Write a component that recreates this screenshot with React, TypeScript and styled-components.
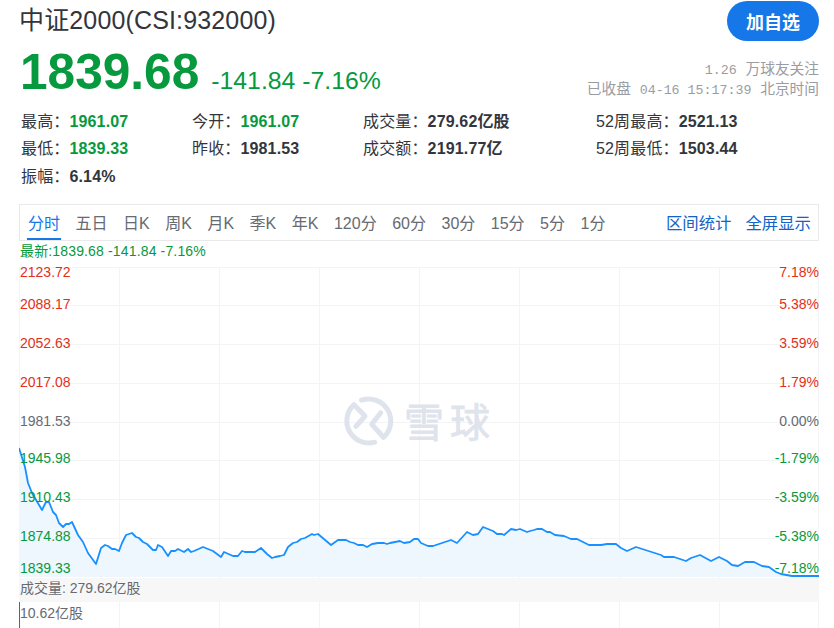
import React from 'react';
import styled, { createGlobalStyle } from 'styled-components';

const SANS = '"Liberation Sans", "Noto Sans CJK SC", sans-serif';
const GREEN = '#06993d';
const RED = '#e1301a';
const BLUE = '#1677e8';

const GlobalStyle = createGlobalStyle`
  html, body {
    margin: 0;
    padding: 0;
    background: #fff;
    overflow: hidden;
  }
  body {
    font-family: ${SANS};
    color: #33353c;
  }
`;

const Page = styled.div`
  width: 834px;
  height: 628px;
  padding: 0 15px 0 19px;
  box-sizing: border-box;
  overflow: hidden;
`;

const Header = styled.div`
  display: flex;
  justify-content: space-between;
  height: 43px;
`;

const Title = styled.h1`
  margin: 0;
  padding: 5px 0 0;
  font-size: 25px;
  line-height: 30px;
  font-weight: 400;
  letter-spacing: 0.15px;
  color: #33353c;
`;

const FollowButton = styled.button`
  width: 92px;
  height: 40px;
  margin: 1px 0 0;
  padding: 0;
  border: 0;
  border-radius: 20px;
  background: ${BLUE};
  color: #fff;
  font-family: ${SANS};
  font-size: 18px;
  font-weight: 700;
`;

const QuoteRow = styled.div`
  display: flex;
  justify-content: space-between;
  height: 59px;
`;

const QuoteMain = styled.div`
  display: flex;
  align-items: baseline;
  gap: 12px;
  padding-left: 1px;
  color: ${GREEN};
`;

const Price = styled.strong`
  font-size: 49.6px;
  line-height: 58px;
  font-weight: 700;
`;

const Change = styled.span`
  font-size: 24.8px;
`;

const Meta = styled.div`
  padding-top: 18px;
  text-align: right;
  color: #9a9ca3;
  font-family: "Liberation Mono", "Noto Sans CJK SC", monospace;
  font-size: 14.7px;
  line-height: 19.5px;
`;

const MetaNum = styled.span`
  font-size: 13.3px;
`;

const Stats = styled.div`
  display: grid;
  grid-template-columns: 171px 171px 233px 1fr;
  grid-auto-rows: 27.5px;
  height: 102px;
  padding: 4px 0 0 2px;
  box-sizing: border-box;
  align-items: center;
`;

const Stat = styled.div`
  font-size: 16px;
  letter-spacing: 0.15px;
  white-space: nowrap;
`;

const StatValue = styled.b<{ $green?: boolean }>`
  font-size: 16px;
  color: ${(p) => (p.$green ? GREEN : '#33353c')};
`;

const TabBar = styled.div`
  display: flex;
  align-items: stretch;
  justify-content: space-between;
  height: 37px;
  padding: 0 7px 0 7px;
  box-sizing: border-box;
  border: 1px solid #e9e9ec;
`;

const Tabs = styled.div`
  display: flex;
  gap: 13.5px;
`;

const Tab = styled.div<{ $active?: boolean }>`
  padding: 0 1px;
  font-size: 16px;
  line-height: 37px;
  height: 35px;
  box-sizing: border-box;
  color: ${(p) => (p.$active ? BLUE : '#666a72')};
  border-bottom: 2px solid ${(p) => (p.$active ? BLUE : 'transparent')};
`;

const TabLinks = styled.div`
  display: flex;
  gap: 14px;
`;

const TabLink = styled.div`
  font-size: 16.4px;
  line-height: 37px;
  color: #1263c7;
`;

const LatestLine = styled.div`
  padding-left: 1px;
  height: 21px;
  font-size: 14px;
  letter-spacing: 0.15px;
  line-height: 21px;
  color: ${GREEN};
`;

const Chart = styled.svg`
  display: block;
  width: 800px;
  height: 366px;
  overflow: hidden;
  font-family: ${SANS};
  font-size: 14px;
`;

// coordinates are page pixels, y=0 in the viewBox is the chart's top grid line
const CHART_X = 19;
const CHART_Y = 267;

const raw = `19,448 25,467 28,483 32,493 42,510 46,502 49,502 53,512 56,515 59,523 63,527 66,524 69,524 72,522 78,535
83,542 88,553 96,564 101,548 105,545 108,546 112,549 115,549 119,551 122,543 126,535 132,533 136,537 139,538 143,542
147,544 153,550 156,550 158,545 162,547 166,553 168,556 171,551 175,551 178,549 184,552 188,549 191,552 194,551 203,547
213,551 221,557 224,552 233,556 238,556 242,551 245,552 255,552 261,548 267,554 272,558 275,557 280,556 284,555 288,547
293,543 297,542 301,539 305,538 312,534 314,535 318,534 331,545 338,540 346,540 350,542 354,543 358,545 363,545 367,547
372,544 378,543 384,543 387,544 390,543 400,541 404,543 410,542 414,539 418,539 421,543 428,546 433,546 442,543 451,540
457,543 467,532 473,535 478,534 483,527 493,531 497,534 502,534 504,535 511,529 516,530 520,529 527,532 530,531 534,530
537,529 542,529 547,532 550,532 555,535 564,536 571,539 577,539 589,545 601,545 607,544 616,544 621,548 627,551 636,547
661,555 664,557 674,557 686,561 691,558 700,555 711,561 719,557 727,561 732,565 738,566 745,562 754,562 762,566 769,567
776,572 781,574 792,576 819,576`;

const points = raw
  .trim()
  .split(/\s+/)
  .map((p) => p.split(',').map(Number))
  .map(([x, y]) => `${x - CHART_X},${y - CHART_Y}`);

const linePath = points.join(' ');
const areaPath = `${linePath} 800,310 0,310`;

const gridY = [0, 38, 77, 116, 155, 193, 232, 271];
const gridX = [0, 100, 200, 300, 400, 500, 600, 700, 800];

const axis = [
  { left: '2123.72', right: '7.18%', y: 10, color: RED },
  { left: '2088.17', right: '5.38%', y: 42, color: RED },
  { left: '2052.63', right: '3.59%', y: 81, color: RED },
  { left: '2017.08', right: '1.79%', y: 120, color: RED },
  { left: '1981.53', right: '0.00%', y: 159, color: '#666a72' },
  { left: '1945.98', right: '-1.79%', y: 196, color: GREEN },
  { left: '1910.43', right: '-3.59%', y: 235, color: GREEN },
  { left: '1874.88', right: '-5.38%', y: 274, color: GREEN },
  { left: '1839.33', right: '-7.18%', y: 306, color: GREEN },
];

const tabs = ['分时', '五日', '日K', '周K', '月K', '季K', '年K', '120分', '60分', '30分', '15分', '5分', '1分'];

const App = () => {
  return (
    <Page>
      <GlobalStyle />
      <Header>
        <Title>中证2000(CSI:932000)</Title>
        <FollowButton>加自选</FollowButton>
      </Header>
      <QuoteRow>
        <QuoteMain>
          <Price>1839.68</Price>
          <Change>-141.84 -7.16%</Change>
        </QuoteMain>
        <Meta>
          <div><MetaNum>1.26</MetaNum> 万球友关注</div>
          <div>已收盘 <MetaNum>04-16 15:17:39</MetaNum> 北京时间</div>
        </Meta>
      </QuoteRow>
      <Stats>
        <Stat>最高：<StatValue $green>1961.07</StatValue></Stat>
        <Stat>今开：<StatValue $green>1961.07</StatValue></Stat>
        <Stat>成交量：<StatValue>279.62亿股</StatValue></Stat>
        <Stat>52周最高：<StatValue>2521.13</StatValue></Stat>
        <Stat>最低：<StatValue $green>1839.33</StatValue></Stat>
        <Stat>昨收：<StatValue>1981.53</StatValue></Stat>
        <Stat>成交额：<StatValue>2191.77亿</StatValue></Stat>
        <Stat>52周最低：<StatValue>1503.44</StatValue></Stat>
        <Stat>振幅：<StatValue>6.14%</StatValue></Stat>
      </Stats>
      <TabBar>
        <Tabs>
          {tabs.map((t, i) => (
            <Tab key={t} $active={i === 0}>{t}</Tab>
          ))}
        </Tabs>
        <TabLinks>
          <TabLink>区间统计</TabLink>
          <TabLink>全屏显示</TabLink>
        </TabLinks>
      </TabBar>
      <LatestLine>最新:1839.68 -141.84 -7.16%</LatestLine>
      <Chart viewBox="0 -5 800 366">
        {gridY.map((y) => (
          <line key={y} x1={0} x2={800} y1={y + 0.5} y2={y + 0.5} stroke="#f3f4f6" />
        ))}
        {gridX.map((x) => (
          <line key={x} x1={x === 800 ? 799.5 : x + 0.5} x2={x === 800 ? 799.5 : x + 0.5} y1={0} y2={361} stroke="#f3f4f6" />
        ))}
        {/* 雪球 watermark */}
        <g fill="none" stroke="#dfe3ec" strokeWidth={5} strokeLinecap="round" strokeLinejoin="round">
          <path d="M342.5 133.2 A22 22 0 0 1 364.5 170.3 L352.7 157.3 L361.7 145.7" />
          <path d="M355.6 175.2 A22 22 0 0 1 335 137.7 L346 149 L337 159.3" />
        </g>
        <text x={385} y={170} fontSize={40} letterSpacing={6} fill="#dfe3ec" stroke="#dfe3ec" strokeWidth={0.8}>雪球</text>

        <polygon points={areaPath} fill="#eef6fe" />
        <polyline points={linePath} fill="none" stroke="#1890ff" strokeWidth={1.8} strokeLinejoin="round" />

        <rect x={0} y={311} width={800} height={24} fill="#f7f7f7" />
        <text x={1} y={326} fontSize={14} fill="#666a72">成交量: 279.62亿股</text>
        <line x1={0.5} x2={0.5} y1={335} y2={361} stroke={GREEN} />
        <text x={1} y={351} fontSize={14} fill="#666a72">10.62亿股</text>

        {axis.map((a) => (
          <g key={a.left} fill={a.color}>
            <text x={1} y={a.y}>{a.left}</text>
            <text x={800} y={a.y} textAnchor="end">{a.right}</text>
          </g>
        ))}
      </Chart>
    </Page>
  );
};

export default App;
